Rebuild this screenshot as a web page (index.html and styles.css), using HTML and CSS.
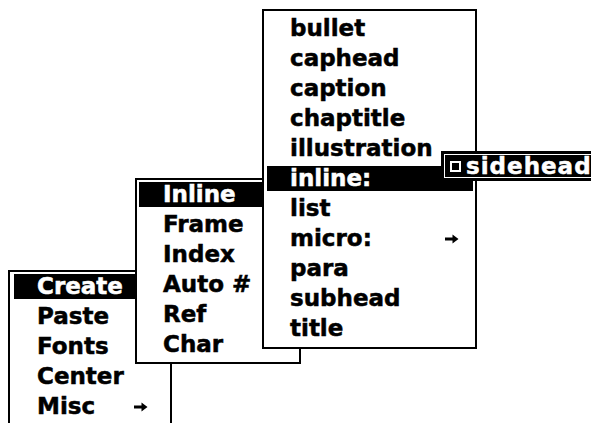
FILE: index.html
```html
<!DOCTYPE html>
<html lang="en">
<head>
  <meta charset="UTF-8">
  <title>Menus</title>
  <link rel="stylesheet" href="styles.css">
</head>
<body>
  <div class="desk">
    <!-- main menu -->
    <ul class="menu menu-main">
      <li class="item on">Create</li>
      <li class="item">Paste</li>
      <li class="item">Fonts</li>
      <li class="item">Center</li>
      <li class="item sub">Misc
        <svg class="arrow" width="14" height="10" viewBox="0 0 14 10"><path d="M0 3.5H7.5V0.5L13.5 5 7.5 9.5V6.5H0Z"/></svg>
      </li>
    </ul>

    <!-- create menu -->
    <ul class="menu menu-create">
      <li class="item on">Inline</li>
      <li class="item">Frame</li>
      <li class="item">Index</li>
      <li class="item">Auto #</li>
      <li class="item">Ref</li>
      <li class="item">Char</li>
    </ul>

    <!-- tag menu -->
    <ul class="menu menu-tags">
      <li class="item">bullet</li>
      <li class="item">caphead</li>
      <li class="item">caption</li>
      <li class="item">chaptitle</li>
      <li class="item">illustration</li>
      <li class="item on">inline:</li>
      <li class="item">list</li>
      <li class="item sub">micro:
        <svg class="arrow" width="14" height="10" viewBox="0 0 14 10"><path d="M0 3.5H7.5V0.5L13.5 5 7.5 9.5V6.5H0Z"/></svg>
      </li>
      <li class="item">para</li>
      <li class="item">subhead</li>
      <li class="item">title</li>
    </ul>

    <!-- inline submenu -->
    <ul class="menu menu-side">
      <li class="item on"><span class="box"></span>sidehead</li>
    </ul>
  </div>
</body>
</html>
```

FILE: styles.css
```css
body { margin: 0; background: #fff; font-family: "DejaVu Sans", "Liberation Sans", sans-serif; color: #000; }
.desk { position: relative; width: 591px; height: 423px; overflow: hidden; background: #fff; }

.menu { position: absolute; margin: 0; list-style: none; background: #fff; border: 2px solid #000; display: flex; flex-direction: column; gap: 5px; box-sizing: border-box; }
.item { height: 25px; line-height: 25px; font-size: 23px; font-weight: bold; -webkit-text-stroke: 0.5px currentColor; white-space: nowrap; display: flex; align-items: center; }
.item.on { background: #000; color: #fff; }
.sub { justify-content: space-between; }
.arrow { fill: #000; }

.menu-main { left: 8px; top: 270px; width: 164px; height: 170px; padding: 2px 4px 6px 4px; }
.menu-main .item { padding-left: 23px; }
.menu-main .arrow { margin-right: 18px; }

.menu-create { left: 135px; top: 178px; width: 166px; padding: 2px 4px 5px 2px; }
.menu-create .item { padding-left: 24px; }

.menu-tags { left: 262px; top: 9px; width: 215px; padding: 5px 2px 6px 3px; }
.menu-tags .item { padding-left: 23px; }
.menu-tags .arrow { margin-right: 14px; }

.menu-side { left: 441px; top: 151px; width: 170px; border-width: 3px; padding: 1px; gap: 0; }
.menu-side .item { height: 22px; line-height: 22px; padding-left: 5px; letter-spacing: 1px; }
.box { width: 11px; height: 11px; border: 2px solid #fff; box-sizing: border-box; margin-right: 5px; flex: none; }
```
